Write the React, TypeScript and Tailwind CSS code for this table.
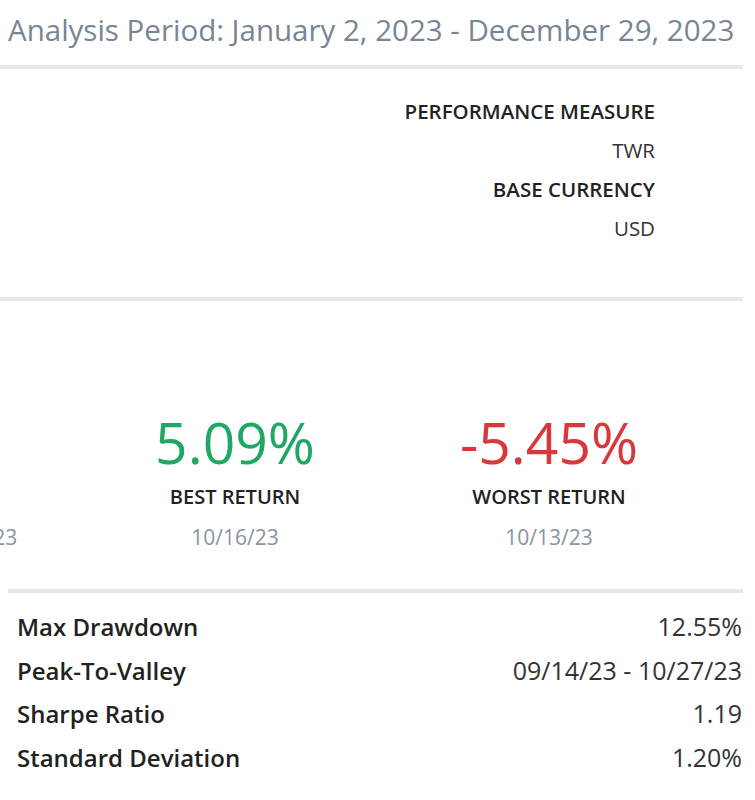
const stats = [
  { value: '', label: '', date: '01/02/23 - 12/29/23', color: 'text-[#222]' },
  { value: '5.09%', label: 'BEST RETURN', date: '10/16/23', color: 'text-[#1fa864]' },
  { value: '-5.45%', label: 'WORST RETURN', date: '10/13/23', color: 'text-[#d8383b]' },
]

const metrics = [
  { label: 'Max Drawdown', value: '12.55%' },
  { label: 'Peak-To-Valley', value: '09/14/23 - 10/27/23' },
  { label: 'Sharpe Ratio', value: '1.19' },
  { label: 'Standard Deviation', value: '1.20%' },
]

function Divider() {
  return <div className="h-[4px] w-full bg-[#e8e8e8]" />
}

export default function App() {
  return (
    <div className="w-[755px] h-[800px] overflow-hidden bg-white font-['Open_Sans',sans-serif] text-[#222]">
      <div className="w-[743px]">
        {/* Header */}
        <div className="h-[65px] pt-[10px] pl-[8px]">
          <h1 className="text-[29.5px] leading-[40px] text-[#788594] whitespace-nowrap">
            Analysis Period: January 2, 2023 - December 29, 2023
          </h1>
        </div>
        <Divider />

        {/* Settings */}
        <div className="h-[228px] pt-[23px] pr-[88px] flex flex-col items-end text-[20.5px] leading-[39px]">
          <div className="font-semibold">PERFORMANCE MEASURE</div>
          <div className="text-[#333]">TWR</div>
          <div className="font-semibold">BASE CURRENCY</div>
          <div className="text-[#333]">USD</div>
        </div>
        <Divider />

        {/* Returns */}
        <div className="h-[288px] pt-[113px]">
          <div className="flex -ml-[236px]">
            {stats.map((s, i) => (
              <div key={i} className="w-[314px] shrink-0 flex flex-col items-center whitespace-nowrap">
                <div className={`h-[57px] text-[57px] leading-[57px] ${s.color}`}>{s.value}</div>
                <div className="mt-[6px] h-[40px] text-[20px] leading-[40px] font-semibold">{s.label}</div>
                <div className="h-[40px] text-[21px] leading-[40px] text-[#8a95a1]">{s.date}</div>
              </div>
            ))}
          </div>
        </div>
        <div className="pl-[8px]">
          <Divider />
        </div>

        {/* Risk metrics */}
        <div className="pt-[12px] pl-[17px] pr-[1px] leading-[43.5px]">
          {metrics.map((m) => (
            <div key={m.label} className="flex justify-between items-baseline">
              <span className="text-[24px] font-semibold">{m.label}</span>
              <span className="text-[25px] text-[#333]">{m.value}</span>
            </div>
          ))}
        </div>
      </div>
    </div>
  )
}
